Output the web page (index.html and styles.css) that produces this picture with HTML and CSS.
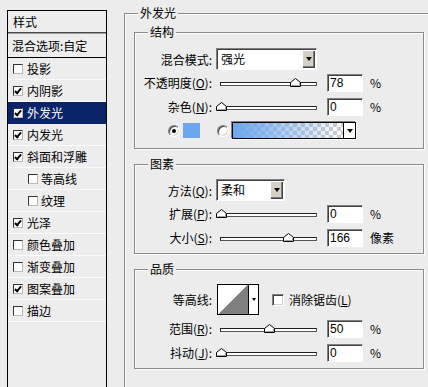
FILE: index.html
```html
<!DOCTYPE html>
<html lang="zh-CN">
<head>
    <meta charset="UTF-8">
    <title>图层样式 - 外发光</title>
    <link rel="stylesheet" href="styles.css">
</head>
<body>
<div class="styles-panel">
    <div class="panel-head">样式</div>
    <div class="panel-blend">混合选项:自定</div>
    <ul class="style-list">
        <li><span class="chk"></span>投影</li>
        <li><span class="chk on"></span>内阴影</li>
        <li class="sel"><span class="chk on"></span>外发光</li>
        <li><span class="chk on"></span>内发光</li>
        <li><span class="chk on"></span>斜面和浮雕</li>
        <li class="sub"><span class="chk"></span>等高线</li>
        <li class="sub"><span class="chk"></span>纹理</li>
        <li><span class="chk on"></span>光泽</li>
        <li><span class="chk"></span>颜色叠加</li>
        <li><span class="chk"></span>渐变叠加</li>
        <li><span class="chk on"></span>图案叠加</li>
        <li><span class="chk"></span>描边</li>
    </ul>
</div>

<div class="settings">
    <div class="group outer">
        <span class="group-title">外发光</span>

        <div class="group inner structure">
            <span class="group-title">结构</span>
            <div class="row row-select">
                <span class="lbl">混合模式:</span>
                <div class="select wide"><span>强光</span><i class="drop"><b></b></i></div>
            </div>
            <div class="row">
                <span class="lbl">不透明度(<u>O</u>):</span>
                <div class="slider"><div class="track">
                    <svg class="thumb" style="left: 78%" width="11" height="9" viewBox="0 0 11 9"><path d="M0.5 8.5V4.5L5.5 0.5L10.5 4.5V8.5Z" fill="#fff" stroke="#000"/><path d="M1.5 7.5H9.5V5" fill="none" stroke="#a0a0a0"/></svg>
                </div></div>
                <div class="num">78</div>
                <span class="unit">%</span>
            </div>
            <div class="row">
                <span class="lbl">杂色(<u>N</u>):</span>
                <div class="slider"><div class="track">
                    <svg class="thumb" style="left: 0%" width="11" height="9" viewBox="0 0 11 9"><path d="M0.5 8.5V4.5L5.5 0.5L10.5 4.5V8.5Z" fill="#fff" stroke="#000"/><path d="M1.5 7.5H9.5V5" fill="none" stroke="#a0a0a0"/></svg>
                </div></div>
                <div class="num">0</div>
                <span class="unit">%</span>
            </div>
            <div class="row row-color">
                <span class="radio on"></span>
                <span class="swatch"></span>
                <span class="radio"></span>
                <div class="gradient"><span class="grad-fill"></span><span class="grad-drop"><b></b></span></div>
            </div>
        </div>

        <div class="group inner pixels">
            <span class="group-title">图素</span>
            <div class="row row-select">
                <span class="lbl">方法(<u>Q</u>):</span>
                <div class="select narrow"><span>柔和</span><i class="drop"><b></b></i></div>
            </div>
            <div class="row">
                <span class="lbl">扩展(<u>P</u>):</span>
                <div class="slider"><div class="track">
                    <svg class="thumb" style="left: 0%" width="11" height="9" viewBox="0 0 11 9"><path d="M0.5 8.5V4.5L5.5 0.5L10.5 4.5V8.5Z" fill="#fff" stroke="#000"/><path d="M1.5 7.5H9.5V5" fill="none" stroke="#a0a0a0"/></svg>
                </div></div>
                <div class="num">0</div>
                <span class="unit">%</span>
            </div>
            <div class="row">
                <span class="lbl">大小(<u>S</u>):</span>
                <div class="slider"><div class="track">
                    <svg class="thumb" style="left: 70%" width="11" height="9" viewBox="0 0 11 9"><path d="M0.5 8.5V4.5L5.5 0.5L10.5 4.5V8.5Z" fill="#fff" stroke="#000"/><path d="M1.5 7.5H9.5V5" fill="none" stroke="#a0a0a0"/></svg>
                </div></div>
                <div class="num">166</div>
                <span class="unit">像素</span>
            </div>
        </div>

        <div class="group inner quality">
            <span class="group-title">品质</span>
            <div class="row row-contour">
                <span class="lbl">等高线:</span>
                <div class="contour"><span class="curve"></span><span class="curve-drop"><b></b></span></div>
                <span class="box"></span>
                <span class="check-text">消除锯齿(<u>L</u>)</span>
            </div>
            <div class="row first-after">
                <span class="lbl">范围(<u>R</u>):</span>
                <div class="slider"><div class="track">
                    <svg class="thumb" style="left: 50%" width="11" height="9" viewBox="0 0 11 9"><path d="M0.5 8.5V4.5L5.5 0.5L10.5 4.5V8.5Z" fill="#fff" stroke="#000"/><path d="M1.5 7.5H9.5V5" fill="none" stroke="#a0a0a0"/></svg>
                </div></div>
                <div class="num">50</div>
                <span class="unit">%</span>
            </div>
            <div class="row">
                <span class="lbl">抖动(<u>J</u>):</span>
                <div class="slider"><div class="track">
                    <svg class="thumb" style="left: 0%" width="11" height="9" viewBox="0 0 11 9"><path d="M0.5 8.5V4.5L5.5 0.5L10.5 4.5V8.5Z" fill="#fff" stroke="#000"/><path d="M1.5 7.5H9.5V5" fill="none" stroke="#a0a0a0"/></svg>
                </div></div>
                <div class="num">0</div>
                <span class="unit">%</span>
            </div>
        </div>
    </div>
</div>
</body>
</html>
```

FILE: styles.css
```css
body {
    margin: 0;
    height: 387px;
    overflow: hidden;
    display: flex;
    align-items: flex-start;
    background: #ececec;
    font-family: "Noto Sans CJK SC", "Liberation Sans", sans-serif;
    font-size: 12px;
    line-height: 14px;
    color: #000;
}

/* left list of styles */
.styles-panel {
    flex-shrink: 0;
    width: 100px;
    height: 377px;
    margin: 10px 0 0 7px;
    box-sizing: border-box;
    border: 1px solid #000;
    border-bottom: none;
    background: #ededed;
}
.panel-head {
    height: 21px;
    line-height: 21px;
    padding-left: 5px;
    border-bottom: 1px solid #4a4a4a;
}
.panel-blend {
    height: 23px;
    line-height: 23px;
    padding-left: 4px;
    border-top: 1px solid #a0a0a0;
    border-bottom: 1px solid #000;
}
.style-list {
    list-style: none;
    margin: 0;
    padding: 0;
}
.style-list li {
    display: flex;
    align-items: center;
    height: 21px;
    padding-left: 5px;
    border-bottom: 1px solid #fbfbfb;
}
.style-list li.sub { padding-left: 20px; }
.style-list li.sel {
    background: #0a246a;
    color: #fff;
    border-bottom-color: #0a246a;
}
.chk {
    position: relative;
    width: 10px;
    height: 10px;
    margin-right: 4px;
    box-sizing: border-box;
    border: 1px solid;
    border-color: #333 #b8b8b8 #b8b8b8 #333;
    background: #fff;
}
.style-list li.sub .chk { margin-right: 3px; }
.chk.on::after {
    content: "";
    position: absolute;
    left: 1px;
    top: 0;
    width: 2px;
    height: 5px;
    border: solid #000;
    border-width: 0 2px 2px 0;
    transform: translate(1px, 0) rotate(40deg);
}

/* right side */
.settings {
    margin: 13px 0 0 17px;
}
.group {
    position: relative;
    box-sizing: border-box;
    border: 1px solid #8a8a8a;
    box-shadow: inset 1px 1px #fff, 1px 1px #fff;
}
.group-title {
    position: absolute;
    top: -8px;
    left: 13px;
    padding: 0 2px;
    line-height: 14px;
    background: #ececec;
}
.outer {
    width: 304px;
    height: 374px;
    padding: 18px 0 0 9px;
    border-right: none;
    border-bottom: none;
}
.inner { width: 290px; }
.inner + .inner { margin-top: 15px; }
.structure { padding: 15px 0 6px; }
.pixels { padding: 14px 0 3px; }
.quality { padding: 14px 0 3px; }

.row {
    display: flex;
    align-items: center;
    height: 24px;
}
.row-select { height: 23px; }
.row-color { height: 23px; }
.row-contour { height: 31px; }
.first-after { margin-top: 2px; }

.lbl {
    flex-shrink: 0;
    width: 77px;
    margin-right: 4px;
    text-align: right;
    white-space: nowrap;
}
.lbl u, .check-text u { text-decoration: underline; }

.select {
    display: flex;
    align-items: center;
    height: 22px;
    box-sizing: border-box;
    padding-left: 4px;
    border: 1px solid;
    border-color: #808080 #fff #fff #808080;
    box-shadow: inset 1px 1px #404040;
    background: #fff;
    align-self: flex-start;
}
.select.wide { width: 101px; }
.select.narrow { width: 69px; }
.select span { flex: 1; }
.drop {
    display: flex;
    align-items: center;
    justify-content: center;
    width: 13px;
    height: 18px;
    margin-right: 1px;
    background: #d4d0c8;
    box-shadow: inset 1px 1px #fff, inset -1px -1px #404040, inset -2px -2px #808080;
}
.drop b, .grad-drop b, .curve-drop b {
    width: 0;
    height: 0;
    border-left: 3px solid transparent;
    border-right: 3px solid transparent;
    border-top: 4px solid #000;
}

.slider {
    display: flex;
    align-items: center;
    width: 105px;
    height: 24px;
    margin-right: 6px;
    padding: 0 4px;
    box-sizing: border-box;
}
.track {
    position: relative;
    flex: 1;
    height: 4px;
    margin-top: 1px;
    box-sizing: border-box;
    border: 1px solid #222;
    border-right-color: #555;
    border-bottom-color: #555;
    background: #fff;
}
.thumb {
    position: absolute;
    top: -5px;
    margin-left: -5px;
}

.num {
    width: 36px;
    height: 18px;
    margin-right: 7px;
    padding-left: 2px;
    box-sizing: border-box;
    border: 1px solid;
    border-color: #808080 #fff #fff #808080;
    box-shadow: inset 1px 1px #404040;
    background: #fff;
    font-family: "Liberation Sans", sans-serif;
    line-height: 16px;
}
.unit { white-space: nowrap; }

.radio {
    display: flex;
    align-items: center;
    justify-content: center;
    width: 12px;
    height: 12px;
    box-sizing: border-box;
    border-radius: 50%;
    border: 1px solid;
    border-color: #808080 #fff #fff #808080;
    box-shadow: inset 1px 1px #404040, inset -1px -1px #d4d0c8;
    background: #fff;
    margin-right: 3px;
}
.row-color .radio:first-child { margin-left: 33px; }
.radio.on::after {
    content: "";
    width: 4px;
    height: 4px;
    border-radius: 50%;
    background: #000;
}
.swatch {
    width: 17px;
    height: 15px;
    margin-right: 17px;
    background: #6ca6ee;
}
.gradient {
    display: flex;
    width: 124px;
    height: 17px;
    box-sizing: border-box;
    border: 1px solid #000;
    box-shadow: -1px -1px #808080, 1px 1px #fff;
}
.grad-fill {
    flex: 1;
    background:
        linear-gradient(to right, #6ca6ee, rgba(108, 166, 238, 0)),
        repeating-conic-gradient(#cdcdcd 0 25%, #fff 0 50%) 0 0 / 8px 8px;
}
.grad-drop {
    display: flex;
    align-items: center;
    justify-content: center;
    width: 11px;
    border-left: 1px solid #000;
    background: #fff;
}

.contour {
    display: flex;
    width: 42px;
    height: 31px;
    margin-left: 1px;
    box-sizing: border-box;
    border: 1px solid #000;
    background: #fff;
}
.curve {
    width: 30px;
    background: linear-gradient(to bottom right, #fff 50%, #808080 50%);
}
.curve-drop {
    display: flex;
    align-items: center;
    justify-content: center;
    flex: 1;
    border-left: 1px solid #000;
}
.curve-drop b {
    border-left-width: 2px;
    border-right-width: 2px;
    border-top-width: 3px;
}
.box {
    width: 12px;
    height: 12px;
    margin: 0 5px 0 13px;
    box-sizing: border-box;
    border: 1px solid;
    border-color: #808080 #fff #fff #808080;
    box-shadow: inset 1px 1px #404040, inset -1px -1px #d4d0c8;
    background: #fff;
}
.check-text { white-space: nowrap; }
```
